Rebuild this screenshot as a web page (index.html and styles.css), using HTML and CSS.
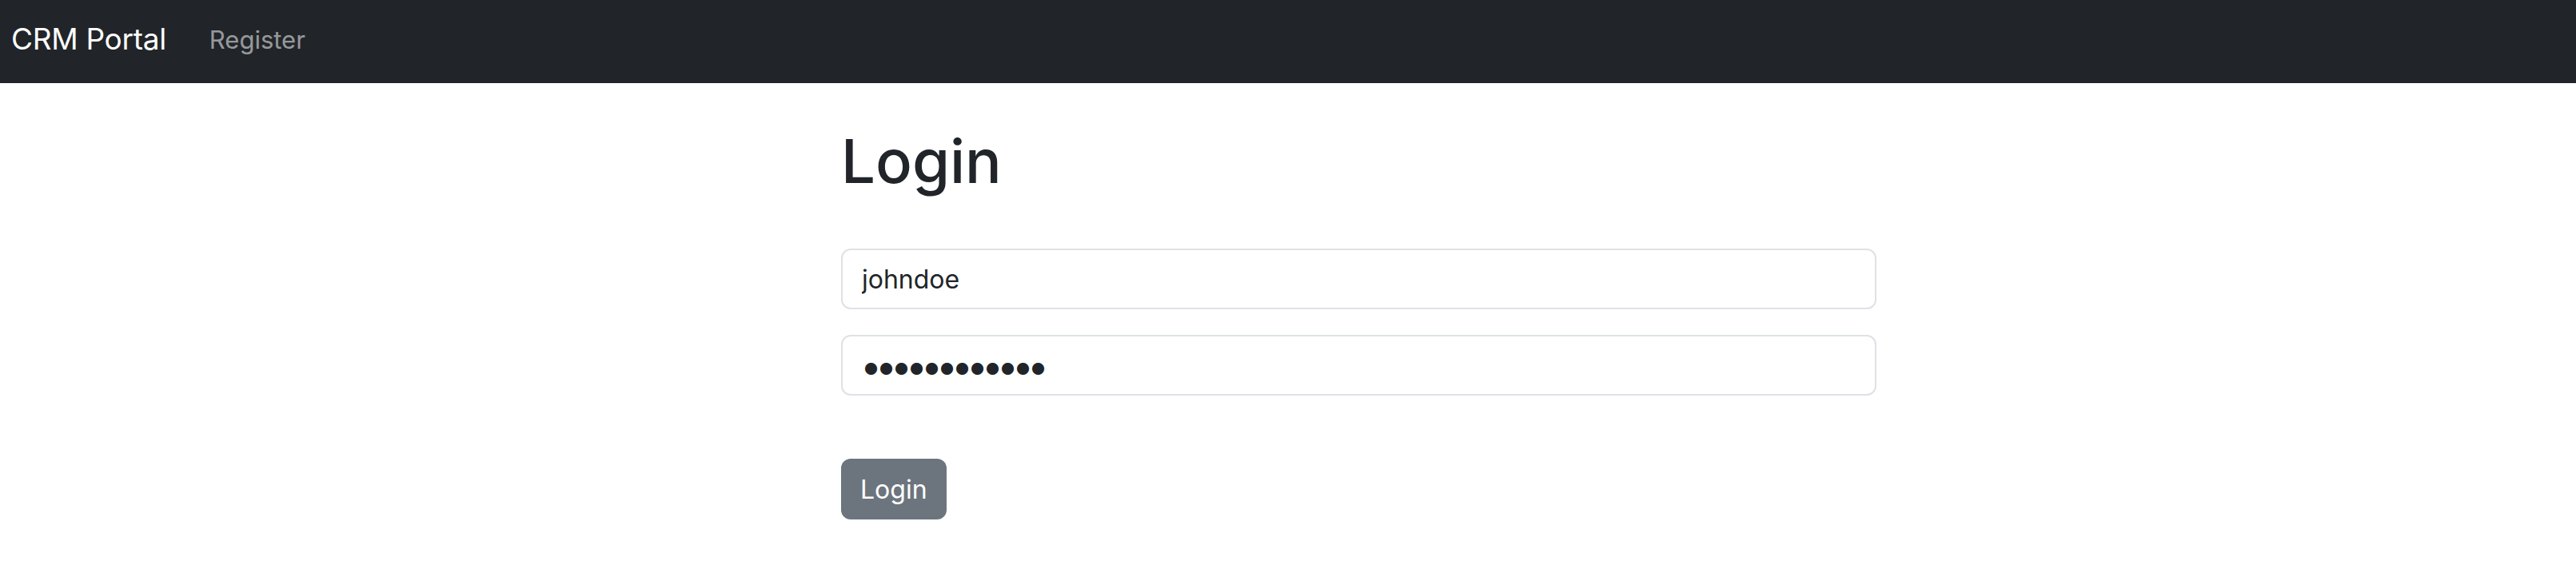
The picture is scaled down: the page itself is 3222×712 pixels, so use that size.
FILE: index.html
```html
<!DOCTYPE html>
<html lang="en">
<head>
<meta charset="utf-8">
<title>CRM Portal - Login</title>
<link rel="stylesheet" href="styles.css">
</head>
<body>
<nav class="navbar">
  <a class="brand" href="#">CRM Portal</a>
  <a class="nav-link" href="#">Register</a>
</nav>
<main class="page">
  <div class="login-col">
    <h1 class="title">Login</h1>
    <form class="login-form">
      <input class="field" type="text" value="johndoe">
      <input class="field field-password" type="password" value="password1234">
      <button class="btn" type="button">Login</button>
    </form>
  </div>
</main>
</body>
</html>
```
FILE: styles.css
```css
* { box-sizing: border-box; }
html, body { margin: 0; padding: 0; }
body {
  font-family: Inter, "Noto Sans", "Liberation Sans", sans-serif;
  color: #212529;
  background: #fff;
}
.navbar {
  height: 104px;
  background: #212529;
  display: flex;
  align-items: center;
  padding: 0 14px;
}
.brand {
  color: #fff;
  text-decoration: none;
  font-size: 37px;
  letter-spacing: -0.3px;
  margin-right: 54px;
  margin-top: -8px;
}
.nav-link {
  color: rgba(255,255,255,.55);
  text-decoration: none;
  font-size: 31px;
  margin-top: -6px;
}
.page {
  padding-left: 1052px;
}
.login-col {
  width: 1295px;
}
.title {
  font-size: 76px;
  font-weight: 500;
  line-height: 1.2;
  margin: 52px 0 0 0;
}
.login-form {
  display: flex;
  flex-direction: column;
  align-items: flex-start;
  margin-top: 64px;
}
.field {
  width: 100%;
  height: 76px;
  border: 2px solid #dee2e6;
  border-radius: 12px;
  padding: 0 24px;
  font-family: inherit;
  font-size: 32px;
  color: #212529;
  background: #fff;
  margin-bottom: 32px;
}
.field-password {
  font-size: 48px;
  letter-spacing: -8px;
  padding-left: 22px;
}
.btn {
  margin-top: 47px;
  height: 76px;
  padding: 0 24px;
  border: 0;
  border-radius: 12px;
  background: #6c757d;
  color: #fff;
  font-family: inherit;
  font-size: 32px;
}
```
